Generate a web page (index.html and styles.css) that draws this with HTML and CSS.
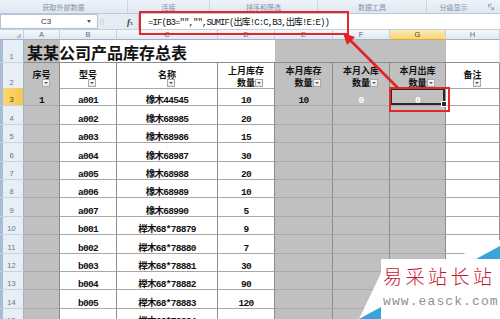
FILE: index.html
```html
<!DOCTYPE html>
<html lang="zh-CN">
<head>
  <meta charset="UTF-8" />
  <title>某某公司产品库存总表</title>
  <link rel="stylesheet" href="styles.css">
</head>
<body>
<div class="window">

  <!-- 功能区分组标题 -->
  <div class="ribbon">
    <div class="group g1">获取外部数据</div>
    <div class="group g2">连接</div>
    <div class="group g3">排序和筛选</div>
    <div class="group g4">数据工具</div>
    <div class="group g5">
      <span>分级显示</span>
      <svg class="launcher" width="6" height="6" viewBox="0 0 6 6"><path d="M0.5 0.5h3M0.5 0.5v3M1.5 1.5l4 4M5.5 3v2.5H3" stroke="#8a9bb0" stroke-width="0.8" fill="none"/></svg>
    </div>
  </div>

  <!-- 编辑栏 -->
  <div class="formula-bar">
    <div class="name-box"><span class="name">C3</span><span class="caret"></span></div>
    <div class="grip"><span class="dot"></span></div>
    <div class="fx"><i>f</i><span>x</span></div>
    <div class="formula">=IF(B3="","",SUMIF(出库!C:C,B3,出库!E:E))</div>
  </div>

  <!-- 工作表 -->
  <div class="sheet">
    <div class="row heads">
      <div class="corner"><span class="tri"></span></div>
      <div class="ch">A</div><div class="ch">B</div><div class="ch">C</div><div class="ch">D</div>
      <div class="ch">E</div><div class="ch">F</div><div class="ch on">G</div><div class="ch">H</div>
    </div>

    <div class="row r1">
      <div class="rh">1</div>
      <div class="title">某某公司产品库存总表</div>
      <div class="c g plain"></div><div class="c g plain"></div><div class="c g plain"></div>
      <div class="c light"></div>
    </div>

    <div class="row r2">
      <div class="rh">2</div>
      <div class="c hd g"><span class="lbl">序号</span><span class="flt"></span></div>
      <div class="c hd"><span class="lbl">型号</span><span class="flt"></span></div>
      <div class="c hd"><span class="lbl">名称</span><span class="flt"></span></div>
      <div class="c hd"><span class="lbl two">上月库存<br>数量</span><span class="flt"></span></div>
      <div class="c hd g"><span class="lbl two">本月库存<br>数量</span><span class="flt"></span></div>
      <div class="c hd g"><span class="lbl two">本月入库<br>数量</span><span class="flt"></span></div>
      <div class="c hd g"><span class="lbl two">本月出库<br>数量</span><span class="flt"></span></div>
      <div class="c hd"><span class="lbl">备注</span><span class="flt"></span></div>
    </div>

    <div class="row">
      <div class="rh on">3</div>
      <div class="c g">1</div><div class="c">a001</div><div class="c">橡木44545</div><div class="c">10</div>
      <div class="c g">10</div><div class="c g white">0</div><div class="c g white sel">0</div><div class="c"></div>
    </div>
    <div class="row">
      <div class="rh">4</div>
      <div class="c g"></div><div class="c">a002</div><div class="c">橡木68985</div><div class="c">20</div>
      <div class="c g"></div><div class="c g"></div><div class="c g"></div><div class="c"></div>
    </div>
    <div class="row">
      <div class="rh">5</div>
      <div class="c g"></div><div class="c">a003</div><div class="c">橡木68986</div><div class="c">15</div>
      <div class="c g"></div><div class="c g"></div><div class="c g"></div><div class="c"></div>
    </div>
    <div class="row">
      <div class="rh">6</div>
      <div class="c g"></div><div class="c">a004</div><div class="c">橡木68987</div><div class="c">30</div>
      <div class="c g"></div><div class="c g"></div><div class="c g"></div><div class="c"></div>
    </div>
    <div class="row">
      <div class="rh">7</div>
      <div class="c g"></div><div class="c">a005</div><div class="c">橡木68988</div><div class="c">20</div>
      <div class="c g"></div><div class="c g"></div><div class="c g"></div><div class="c"></div>
    </div>
    <div class="row">
      <div class="rh">8</div>
      <div class="c g"></div><div class="c">a006</div><div class="c">橡木68989</div><div class="c">10</div>
      <div class="c g"></div><div class="c g"></div><div class="c g"></div><div class="c"></div>
    </div>
    <div class="row">
      <div class="rh">9</div>
      <div class="c g"></div><div class="c">a007</div><div class="c">橡木68990</div><div class="c">5</div>
      <div class="c g"></div><div class="c g"></div><div class="c g"></div><div class="c"></div>
    </div>
    <div class="row">
      <div class="rh">10</div>
      <div class="c g"></div><div class="c">b001</div><div class="c">榉木68*78879</div><div class="c">9</div>
      <div class="c g"></div><div class="c g"></div><div class="c g"></div><div class="c"></div>
    </div>
    <div class="row">
      <div class="rh">11</div>
      <div class="c g"></div><div class="c">b002</div><div class="c">榉木68*78880</div><div class="c">7</div>
      <div class="c g"></div><div class="c g"></div><div class="c g"></div><div class="c"></div>
    </div>
    <div class="row">
      <div class="rh">12</div>
      <div class="c g"></div><div class="c">b003</div><div class="c">榉木68*78881</div><div class="c">30</div>
      <div class="c g"></div><div class="c g"></div><div class="c g"></div><div class="c"></div>
    </div>
    <div class="row">
      <div class="rh">13</div>
      <div class="c g"></div><div class="c">b004</div><div class="c">榉木68*78882</div><div class="c">90</div>
      <div class="c g"></div><div class="c g"></div><div class="c g"></div><div class="c"></div>
    </div>
    <div class="row">
      <div class="rh">14</div>
      <div class="c g"></div><div class="c">b005</div><div class="c">榉木68*78883</div><div class="c">120</div>
      <div class="c g"></div><div class="c g"></div><div class="c g"></div><div class="c"></div>
    </div>
    <div class="row">
      <div class="rh">15</div>
      <div class="c g"></div><div class="c"></div><div class="c">榉木68*78884</div><div class="c"></div>
      <div class="c g"></div><div class="c g"></div><div class="c g"></div><div class="c"></div>
    </div>
  </div>

  <!-- 标注：红框与箭头 -->
  <div class="mark mark-formula"></div>
  <div class="mark mark-cell"></div>
  <svg class="overlay" width="500" height="319" viewBox="0 0 500 319">
    <line x1="398" y1="88" x2="350" y2="40" stroke="#e3231f" stroke-width="2.6"/>
    <polygon points="343,33 355,37 347,45" fill="#e3231f"/>
  </svg>

  <!-- 水印 -->
  <svg class="overlay" width="500" height="319" viewBox="0 0 500 319">
    <polygon points="381,259 450,259 500,240 500,319 359,319 381,273" fill="#fff"/>
    <polygon points="476,259 500,246 500,259" fill="#38a4dc"/>
    <polygon points="359,319 381,307 381,319" fill="#38a4dc"/>
  </svg>
  <div class="watermark">
    <div class="wm-name">易采站长站</div>
    <div class="wm-url">www.easck.com</div>
  </div>

</div>
</body>
</html>
```

FILE: styles.css
```css
/* RESET */
* {
  margin: 0;
  padding: 0;
  box-sizing: border-box;
}

body {
  background: #fff;
  font-family: "Liberation Sans", "Noto Sans CJK SC", sans-serif;
}

.window {
  position: relative;
  width: 500px;
  height: 319px;
  overflow: hidden;
}

/* 功能区 */
.ribbon {
  display: flex;
  height: 14px;
  background: linear-gradient(#eef3f9, #dfe7f1);
  border-bottom: 1px solid #b9c9db;
}

.group {
  display: flex;
  align-items: center;
  justify-content: center;
  gap: 20px;
  font-size: 7px;
  color: #8494a8;
  border-right: 1px solid #c9d6e5;
}

.g1 { width: 128px; }
.g2 { width: 82px; }
.g3 { width: 108px; }
.g4 { width: 109px; }
.g5 { width: 73px; border-right: none; padding-left: 6px; }

/* 编辑栏 */
.formula-bar {
  display: flex;
  height: 16px;
  background: #e6ecf4;
  border-bottom: 1px solid #c3d0df;
}

.name-box {
  width: 98px;
  display: flex;
  align-items: center;
  background: #fff;
  border: 1px solid #b3c3d6;
}

.name {
  flex: 1;
  text-align: center;
  font-size: 8px;
  color: #333;
  padding-left: 4px;
}

.caret {
  width: 0;
  height: 0;
  margin-right: 6px;
  border-left: 2.5px solid transparent;
  border-right: 2.5px solid transparent;
  border-top: 3px solid #555;
}

.grip {
  width: 29px;
  display: flex;
  align-items: center;
  padding-left: 2px;
}

.dot {
  width: 4px;
  height: 6px;
  border-radius: 3px;
  border: 1px solid #cdd6e0;
}

.fx {
  width: 11px;
  display: flex;
  align-items: center;
  font-family: "Liberation Serif", serif;
  font-size: 8px;
  color: #444;
}

.fx i {
  font-size: 9px;
  font-weight: bold;
}

.fx span {
  font-size: 6px;
  margin-top: 3px;
}

.formula {
  flex: 1;
  display: flex;
  align-items: center;
  padding-left: 9px;
  background: #fff;
  border-left: 1px solid #b3c3d6;
  font-family: "Liberation Mono", "Noto Sans CJK SC", monospace;
  font-size: 9px;
  letter-spacing: -0.9px;
  color: #111;
  white-space: nowrap;
}

/* 工作表 */
.row {
  display: grid;
  grid-template-columns: 24px 36px 57px 101px 57px 58px 57px 56px 54px;
  height: 18.4px;
}

.heads { height: 10px; }
.r1 { height: 23px; }
.r2 { height: 25px; }

.corner,
.ch {
  background: linear-gradient(#f6f8fb, #e1e8f1);
  border-right: 1px solid #c2cfdf;
  border-bottom: 1px solid #9eb2c9;
}

.corner {
  display: flex;
  align-items: flex-end;
  justify-content: flex-end;
  padding: 0 2px 1px 0;
}

.tri {
  width: 0;
  height: 0;
  border-left: 5px solid transparent;
  border-bottom: 5px solid #b7c2ce;
}

.ch {
  display: flex;
  align-items: center;
  justify-content: center;
  font-size: 7.5px;
  color: #5a6a7c;
}

.ch.on {
  background: linear-gradient(#fcebb4, #f7d579);
  border-bottom-color: #e1a93b;
  color: #4a3a1a;
}

.rh {
  display: flex;
  align-items: flex-end;
  justify-content: center;
  padding-bottom: 1px;
  font-size: 7.5px;
  line-height: 8px;
  color: #66768a;
  background: #e8eef6;
  border-right: 1px solid #9eb2c9;
  border-bottom: 1px solid #c8d4e2;
  box-shadow: inset 3px 0 0 #a9bcd4;
}

.rh.on {
  background: linear-gradient(90deg, #f9d978, #f6c84e);
  color: #5a4415;
}

/* 单元格 */
.c {
  display: flex;
  align-items: flex-end;
  justify-content: center;
  font-family: "Liberation Mono", "Noto Sans CJK SC", monospace;
  font-weight: bold;
  font-size: 9.5px;
  line-height: 8px;
  letter-spacing: -0.7px;
  color: #111;
  white-space: nowrap;
  border-right: 1px solid #8c8c8c;
  border-bottom: 1px solid #a8a8a8;
}

.c.g { background: #c0c0c0; }
.c.white { color: #fff; }

.c.sel {
  position: relative;
  box-shadow: inset 0 0 0 2px #2a2a2a;
}

.c.sel::after {
  content: "";
  position: absolute;
  right: -2px;
  bottom: -2px;
  width: 4px;
  height: 4px;
  background: #2a2a2a;
  border: 1px solid #fff;
}

/* 第一行：标题 */
.title {
  grid-column: span 4;
  display: flex;
  align-items: flex-end;
  padding: 0 0 1px 3px;
  font-family: "Noto Sans CJK SC", sans-serif;
  font-weight: bold;
  font-size: 16px;
  line-height: 18px;
  color: #111;
  background: linear-gradient(90deg, #c0c0c0 36px, #fff 36px);
  border-bottom: 1px solid #8c8c8c;
}

.c.plain { border-right: none; border-bottom-color: #8c8c8c; }
.c.light { border-right-color: #d6dde8; border-bottom-color: #8c8c8c; }

/* 表头 */
.c.hd {
  display: grid;
}

.hd > span { grid-area: 1 / 1; }

.lbl {
  align-self: center;
  justify-self: center;
  text-align: center;
  font-family: "Noto Sans CJK SC", sans-serif;
  font-size: 9px;
  line-height: 11px;
  letter-spacing: 0;
  padding-bottom: 3px;
}

.lbl.two {
  line-height: 11.5px;
  padding: 2px 0 0;
}

.flt {
  align-self: end;
  justify-self: end;
  width: 8px;
  height: 8px;
  margin: 0 1px 1px 0;
  display: flex;
  align-items: center;
  justify-content: center;
  background: linear-gradient(#fdfdfd, #e8e8e8);
  border: 1px solid #a9a9a9;
}

.flt::after {
  content: "";
  border-left: 2px solid transparent;
  border-right: 2px solid transparent;
  border-top: 2px solid #555;
}

/* 标注 */
.mark {
  position: absolute;
  border: 2px solid #e5262a;
}

.mark-formula {
  left: 139px;
  top: 11px;
  width: 210px;
  height: 24px;
}

.mark-cell {
  left: 389px;
  top: 87px;
  width: 61px;
  height: 25px;
}

.overlay {
  position: absolute;
  left: 0;
  top: 0;
  pointer-events: none;
}

/* 水印 */
.watermark {
  position: absolute;
  left: 383px;
  top: 265px;
  width: 117px;
  display: flex;
  flex-direction: column;
  gap: 8px;
  white-space: nowrap;
}

.wm-name {
  font-family: "Noto Sans CJK SC", sans-serif;
  font-weight: 300;
  font-size: 19px;
  line-height: 22px;
  letter-spacing: 3.5px;
  color: #c8142f;
}

.wm-url {
  font-family: "Liberation Mono", monospace;
  font-size: 13px;
  line-height: 13px;
  letter-spacing: 1.1px;
  color: #909090;
}
```
